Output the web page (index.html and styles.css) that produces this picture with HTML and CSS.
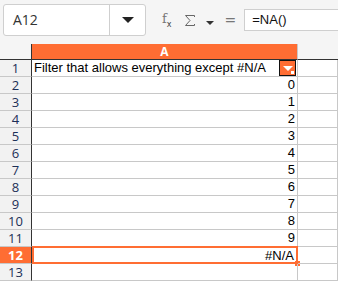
FILE: index.html
```html
<!DOCTYPE html>
<html lang="en">
  <head>
    <meta charset="UTF-8" />
    <title>Sheet</title>
    <link rel="stylesheet" href="styles.css">
  </head>
  <body>
    <div class="toolbar">
      <div class="name-box">
        <span class="name-text">A12</span>
        <span class="name-drop"><span class="tri"></span></span>
      </div>
      <span class="fx">f<sub>x</sub></span>
      <svg class="sigma" width="12" height="13" viewBox="0 0 12 13">
        <path d="M10.5 3 V1.5 H1.5 L6 6.5 L1.5 11.5 H10.5 V10" fill="none" stroke="#666" stroke-width="1" />
      </svg>
      <span class="tri small"></span>
      <span class="equals">=</span>
      <div class="formula">=NA()</div>
    </div>

    <div class="sheet">
      <div class="row head">
        <div class="rh corner"></div>
        <div class="cell col-a sel">A</div>
        <div class="cell col-b">B</div>
      </div>
      <div class="row">
        <div class="rh">1</div>
        <div class="cell col-a text">Filter that allows everything except #N/A
          <span class="filter-btn"><span class="ftri"></span><span class="fdot"></span></span>
        </div>
        <div class="cell col-b"></div>
      </div>
      <div class="row"><div class="rh">2</div><div class="cell col-a">0</div><div class="cell col-b"></div></div>
      <div class="row"><div class="rh">3</div><div class="cell col-a">1</div><div class="cell col-b"></div></div>
      <div class="row"><div class="rh">4</div><div class="cell col-a">2</div><div class="cell col-b"></div></div>
      <div class="row"><div class="rh">5</div><div class="cell col-a">3</div><div class="cell col-b"></div></div>
      <div class="row"><div class="rh">6</div><div class="cell col-a">4</div><div class="cell col-b"></div></div>
      <div class="row"><div class="rh">7</div><div class="cell col-a">5</div><div class="cell col-b"></div></div>
      <div class="row"><div class="rh">8</div><div class="cell col-a">6</div><div class="cell col-b"></div></div>
      <div class="row"><div class="rh">9</div><div class="cell col-a">7</div><div class="cell col-b"></div></div>
      <div class="row"><div class="rh">10</div><div class="cell col-a">8</div><div class="cell col-b"></div></div>
      <div class="row"><div class="rh">11</div><div class="cell col-a">9</div><div class="cell col-b"></div></div>
      <div class="row"><div class="rh sel">12</div><div class="cell col-a cursor">#N/A<span class="handle"></span></div><div class="cell col-b"></div></div>
      <div class="row"><div class="rh">13</div><div class="cell col-a"></div><div class="cell col-b"></div></div>
    </div>
  </body>
</html>
```

FILE: styles.css
```css
body {
  margin: 0;
  background: #ffffff;
  font-family: "Liberation Sans", Arial, sans-serif;
  overflow: hidden;
}

/* Top bar with name box and formula */
.toolbar {
  display: flex;
  align-items: center;
  height: 44px;
  background: #f5f5f5;
  padding-left: 3px;
  box-sizing: border-box;
}

.name-box {
  display: flex;
  width: 143px;
  height: 32px;
  margin-top: -4px;
  background: #fff;
  border: 1px solid #cfcfcf;
  border-radius: 3px;
  box-sizing: border-box;
}

.name-text {
  width: 106px;
  padding-left: 9px;
  line-height: 30px;
  font-family: "Open Sans", sans-serif;
  font-size: 14px;
  color: #333;
  border-right: 1px solid #cfcfcf;
  box-sizing: border-box;
}

.name-drop {
  flex: 1;
  display: flex;
  align-items: center;
  justify-content: center;
}

.tri {
  width: 0;
  height: 0;
  border-left: 6px solid transparent;
  border-right: 6px solid transparent;
  border-top: 6px solid #222;
}

.tri.small {
  border-left-width: 4px;
  border-right-width: 4px;
  border-top: 4px solid #333;
  margin: 0 0 -2px 0;
}

.fx {
  margin-left: 16px;
  margin-top: -4px;
  font-family: "DejaVu Serif", serif;
  font-size: 13px;
  color: #777;
}

.fx sub {
  font-size: 8px;
  font-family: "DejaVu Sans", sans-serif;
  color: #444;
}

.sigma {
  margin: -4px 10px 0 12px;
}

.equals {
  margin: -4px 8px 0 11px;
  font-family: "DejaVu Sans", sans-serif;
  font-size: 14px;
  color: #777;
}

.formula {
  flex: 1;
  height: 22px;
  margin-top: -4px;
  padding-left: 7px;
  line-height: 20px;
  background: #fff;
  border: 1px solid #cfcfcf;
  border-right: none;
  box-sizing: border-box;
  font-size: 13px;
  color: #111;
}

/* Grid */
.row {
  display: flex;
  height: 17px;
}

.row.head {
  height: 16px;
}

.rh {
  width: 31px;
  flex: none;
  background: #f2f2f2;
  border-right: 1px solid #333;
  border-bottom: 1px solid #c8c8c8;
  text-align: center;
  font-family: "Open Sans", sans-serif;
  font-size: 13px;
  line-height: 16px;
  color: #1c2f57;
}

.rh.corner {
  background: #f5f5f5;
  border-bottom-color: #333;
}

.rh.sel {
  background: #ff6d33;
  color: #fff;
  font-weight: bold;
}

.cell {
  position: relative;
  border-bottom: 1px solid #c8c8c8;
  border-right: 1px solid #c8c8c8;
  font-size: 13px;
  line-height: 16px;
  color: #000;
  box-sizing: border-box;
}

.col-a {
  width: 266px;
  flex: none;
  text-align: right;
  padding-right: 2px;
}

.col-a.text {
  text-align: left;
  padding-left: 2px;
}

.col-b {
  flex: 1;
}

.head .cell {
  font-family: "Open Sans", sans-serif;
  font-size: 12px;
  text-align: center;
  line-height: 15px;
  background: #f5f5f5;
  border-bottom: 1px solid #333;
  color: #333;
  padding: 0;
}

.head .col-a.sel {
  background: #ff6d33;
  color: #fff;
  font-weight: bold;
}

.head .col-b {
  text-indent: 40px;
}

/* Autofilter button in A1 */
.filter-btn {
  position: absolute;
  right: 1px;
  top: 0;
  width: 17px;
  height: 16px;
  background: #ff6d33;
  border: 1px solid #111;
  box-sizing: border-box;
}

.ftri {
  position: absolute;
  left: 3px;
  top: 5px;
  border-left: 5px solid transparent;
  border-right: 5px solid transparent;
  border-top: 5px solid #fff;
}

.fdot {
  position: absolute;
  right: 1px;
  bottom: 1px;
  width: 3px;
  height: 3px;
  background: #fff;
}

/* Selected cell cursor */
.cursor {
  border: 2px solid #ff6d33;
  margin-top: -1px;
  height: 18px;
  line-height: 15px;
}

.handle {
  position: absolute;
  right: -4px;
  bottom: -4px;
  width: 5px;
  height: 5px;
  background: #ff6d33;
}
```
